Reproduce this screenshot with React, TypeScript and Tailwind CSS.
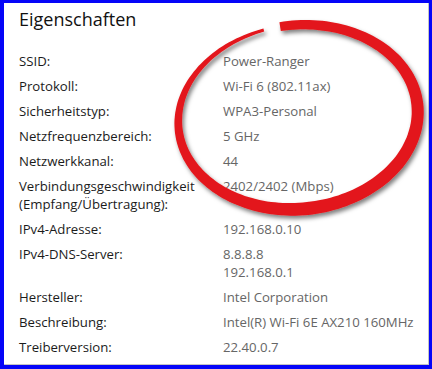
import React from 'react';

const rows: { label: string[]; value: string[] }[] = [
    { label: ['SSID:'], value: ['Power-Ranger'] },
    { label: ['Protokoll:'], value: ['Wi-Fi 6 (802.11ax)'] },
    { label: ['Sicherheitstyp:'], value: ['WPA3-Personal'] },
    { label: ['Netzfrequenzbereich:'], value: ['5 GHz'] },
    { label: ['Netzwerkkanal:'], value: ['44'] },
    {
        label: ['Verbindungsgeschwindigkeit', '(Empfang/Übertragung):'],
        value: ['2402/2402 (Mbps)'],
    },
    { label: ['IPv4-Adresse:'], value: ['192.168.0.10'] },
    { label: ['IPv4-DNS-Server:'], value: ['8.8.8.8', '192.168.0.1'] },
    { label: ['Hersteller:'], value: ['Intel Corporation'] },
    { label: ['Beschreibung:'], value: ['Intel(R) Wi-Fi 6E AX210 160MHz'] },
    { label: ['Treiberversion:'], value: ['22.40.0.7'] },
];

// hand-drawn looking ring, thicker at the bottom right
function ringPath() {
    const cx = 298;
    const cy = 117;
    const a = 120;
    const b = 92;
    const rot = (-6 * Math.PI) / 180;
    const widths: [number, number][] = [
        [-94, 9],
        [-60, 10],
        [0, 12],
        [90, 13],
        [150, 10],
        [180, 8],
        [220, 5],
        [259, 3],
    ];
    const w = (t: number) => {
        for (let i = 0; i < widths.length - 1; i++) {
            const [t0, w0] = widths[i];
            const [t1, w1] = widths[i + 1];
            if (t >= t0 && t <= t1) return w0 + ((t - t0) / (t1 - t0)) * (w1 - w0);
        }
        return 3;
    };
    const outer: string[] = [];
    const inner: string[] = [];
    for (let d = -94; d <= 259; d += 2) {
        const t = (d * Math.PI) / 180;
        const x = a * Math.cos(t);
        const y = b * Math.sin(t);
        let nx = b * Math.cos(t);
        let ny = a * Math.sin(t);
        const len = Math.hypot(nx, ny);
        nx /= len;
        ny /= len;
        const hw = w(d) / 2;
        const pt = (px: number, py: number) => {
            const rx = px * Math.cos(rot) - py * Math.sin(rot) + cx;
            const ry = px * Math.sin(rot) + py * Math.cos(rot) + cy;
            return `${rx.toFixed(1)} ${ry.toFixed(1)}`;
        };
        outer.push(pt(x + nx * hw, y + ny * hw));
        inner.push(pt(x - nx * hw, y - ny * hw));
    }
    return `M${outer.join(' L')} L${inner.reverse().join(' L')} Z`;
}

export default function App() {
    return (
        <div className="relative h-[369px] w-[432px] overflow-hidden border-t-[3px] border-r-[3px] border-b-4 border-l-4 border-[#0505f8] bg-white">
            <div className="h-full border-r border-b border-[#c4c4c4] pt-[2px] pl-[15px] font-['Open_Sans',sans-serif]">
                <h1 className="text-[18px] leading-[28px] font-normal text-[#111]">
                    Eigenschaften
                </h1>
                <div className="mt-[19px] grid grid-cols-[204px_1fr] gap-y-[7px] text-[13.2px] leading-[18px]">
                    {rows.map((r) => (
                        <React.Fragment key={r.label[0]}>
                            <div className="text-[#1b1b1b]">
                                {r.label.map((l) => (
                                    <div key={l} className="whitespace-nowrap">
                                        {l}
                                    </div>
                                ))}
                            </div>
                            <div className="text-[#666]">
                                {r.value.map((v) => (
                                    <div key={v} className="whitespace-nowrap">
                                        {v}
                                    </div>
                                ))}
                            </div>
                        </React.Fragment>
                    ))}
                </div>
            </div>
            <svg
                className="pointer-events-none absolute top-[-3px] left-[-4px]"
                width="432"
                height="369"
                viewBox="0 0 432 369"
            >
                <defs>
                    <filter id="sh" x="-10%" y="-10%" width="130%" height="130%">
                        <feDropShadow dx="2" dy="3" stdDeviation="2" floodColor="#000" floodOpacity="0.5" />
                    </filter>
                </defs>
                <path d={ringPath()} fill="#e3161b" filter="url(#sh)" />
            </svg>
        </div>
    );
}
